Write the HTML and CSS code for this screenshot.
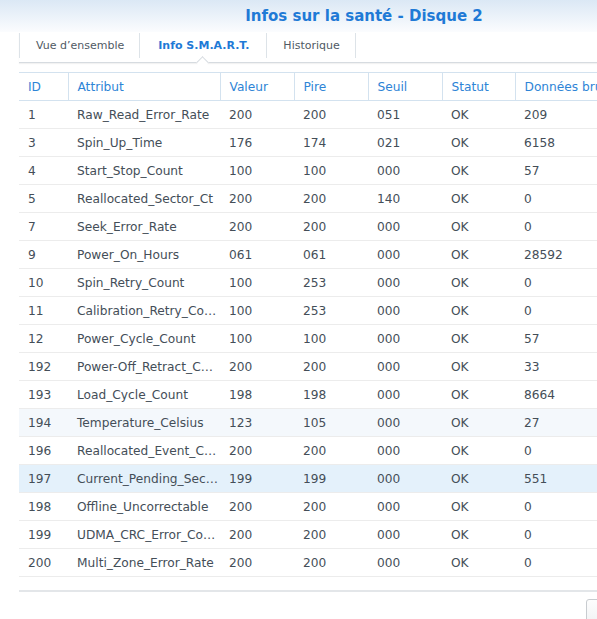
FILE: index.html
```html
<!DOCTYPE html>
<html lang="fr">
<head>
<meta charset="UTF-8">
<title>Infos sur la santé - Disque 2</title>
<link rel="stylesheet" href="styles.css">
</head>
<body>

<div class="window">
    <!-- Title bar -->
    <div class="title-bar">Infos sur la santé - Disque 2</div>

    <!-- Tabs -->
    <div class="tabs">
        <div class="tab">Vue d’ensemble</div>
        <div class="tab active">Info S.M.A.R.T.</div>
        <div class="tab">Historique</div>
    </div>

    <!-- SMART table -->
    <div class="grid">
        <table>
            <colgroup>
                <col class="c-id">
                <col class="c-attr">
                <col class="c-num">
                <col class="c-num">
                <col class="c-num">
                <col class="c-stat">
                <col class="c-raw">
            </colgroup>
            <thead>
                <tr>
                    <th>ID</th>
                    <th>Attribut</th>
                    <th>Valeur</th>
                    <th>Pire</th>
                    <th>Seuil</th>
                    <th>Statut</th>
                    <th>Données brutes</th>
                </tr>
            </thead>
            <tbody>
                <tr><td>1</td><td>Raw_Read_Error_Rate</td><td>200</td><td>200</td><td>051</td><td>OK</td><td>209</td></tr>
                <tr><td>3</td><td>Spin_Up_Time</td><td>176</td><td>174</td><td>021</td><td>OK</td><td>6158</td></tr>
                <tr><td>4</td><td>Start_Stop_Count</td><td>100</td><td>100</td><td>000</td><td>OK</td><td>57</td></tr>
                <tr><td>5</td><td>Reallocated_Sector_Ct</td><td>200</td><td>200</td><td>140</td><td>OK</td><td>0</td></tr>
                <tr><td>7</td><td>Seek_Error_Rate</td><td>200</td><td>200</td><td>000</td><td>OK</td><td>0</td></tr>
                <tr><td>9</td><td>Power_On_Hours</td><td>061</td><td>061</td><td>000</td><td>OK</td><td>28592</td></tr>
                <tr><td>10</td><td>Spin_Retry_Count</td><td>100</td><td>253</td><td>000</td><td>OK</td><td>0</td></tr>
                <tr><td>11</td><td>Calibration_Retry_Count</td><td>100</td><td>253</td><td>000</td><td>OK</td><td>0</td></tr>
                <tr><td>12</td><td>Power_Cycle_Count</td><td>100</td><td>100</td><td>000</td><td>OK</td><td>57</td></tr>
                <tr><td>192</td><td>Power-Off_Retract_Count</td><td>200</td><td>200</td><td>000</td><td>OK</td><td>33</td></tr>
                <tr><td>193</td><td>Load_Cycle_Count</td><td>198</td><td>198</td><td>000</td><td>OK</td><td>8664</td></tr>
                <tr class="hover"><td>194</td><td>Temperature_Celsius</td><td>123</td><td>105</td><td>000</td><td>OK</td><td>27</td></tr>
                <tr><td>196</td><td>Reallocated_Event_Count</td><td>200</td><td>200</td><td>000</td><td>OK</td><td>0</td></tr>
                <tr class="selected"><td>197</td><td>Current_Pending_Sector</td><td>199</td><td>199</td><td>000</td><td>OK</td><td>551</td></tr>
                <tr><td>198</td><td>Offline_Uncorrectable</td><td>200</td><td>200</td><td>000</td><td>OK</td><td>0</td></tr>
                <tr><td>199</td><td>UDMA_CRC_Error_Count</td><td>200</td><td>200</td><td>000</td><td>OK</td><td>0</td></tr>
                <tr><td>200</td><td>Multi_Zone_Error_Rate</td><td>200</td><td>200</td><td>000</td><td>OK</td><td>0</td></tr>
            </tbody>
        </table>
    </div>

    <!-- Footer buttons -->
    <div class="footer">
        <button class="btn">Fermer</button>
    </div>
</div>

</body>
</html>
```

FILE: styles.css
```css
/* Basic Styles */
html, body {
    margin: 0;
    padding: 0;
    overflow: hidden;
    background: #fff;
}
body {
    font-family: "DejaVu Sans", Verdana, sans-serif;
    font-size: 12.2px;
    color: #444e58;
}
.window {
    width: 740px;
    height: 619px;
    background: #fff;
}
/* Title Bar */
.title-bar {
    height: 32px;
    line-height: 32px;
    text-align: center;
    padding-right: 12px;
    font-size: 15px;
    font-weight: bold;
    color: #1f7ad6;
    background: linear-gradient(#dbe8f5, #fbfcfe);
}
/* Tabs */
.tabs {
    position: relative;
    display: flex;
    margin-left: 19px;
    height: 31px;
    border-bottom: 1px solid #d6dbe0;
    box-shadow: 0 1px 1px rgba(0, 0, 0, 0.05);
    box-sizing: border-box;
}
.tab {
    height: 25px;
    line-height: 25px;
    margin-top: 1px;
    padding: 0 15px 0 16px;
    border-left: 1px solid #dde3e8;
    font-size: 11px;
    color: #505a64;
    position: relative;
}
.tab:last-child {
    border-right: 1px solid #dde3e8;
}
.tab.active {
    padding: 0 17px 0 18px;
    font-weight: bold;
    color: #1f7ad6;
}
.tab.active::after {
    content: "";
    position: absolute;
    left: 50%;
    bottom: -9px;
    width: 8px;
    height: 8px;
    margin-left: -5px;
    background: #fff;
    border-top: 1px solid #d6dbe0;
    border-left: 1px solid #d6dbe0;
    transform: rotate(45deg);
}
/* Table */
.grid {
    margin: 9px 0 0 19px;
    height: 518px;
    border-bottom: 2px solid #e3e6e9;
}
table {
    width: 721px;
    border-collapse: collapse;
    table-layout: fixed;
}
.c-id { width: 49px; }
.c-attr { width: 152px; }
.c-num { width: 74px; }
.c-stat { width: 73px; }
.c-raw { width: 225px; }
th, td {
    height: 27px;
    padding: 0 2px 0 9px;
    text-align: left;
    white-space: nowrap;
    overflow: hidden;
    text-overflow: ellipsis;
    font-weight: normal;
}
th {
    color: #2e84d6;
    border-top: 1px solid #d3e2ef;
    border-bottom: 1px solid #d3e2ef;
    border-left: 1px solid #d3e2ef;
}
th:first-child {
    border-left: none;
}
td {
    border-bottom: 1px solid #ececec;
}
tr.hover td {
    background: #f4f8fc;
}
tr.selected td {
    background: #e4f1fb;
}
/* Footer */
.footer {
    display: flex;
    padding: 7px 0 0 566px;
}
.btn {
    height: 30px;
    min-width: 80px;
    border: 1px solid #c8ccd0;
    border-radius: 3px;
    background: linear-gradient(#fdfdfd, #eef0f2);
    font-family: inherit;
    font-size: 12px;
    color: #414b55;
    margin-left: 20px;
}
```
